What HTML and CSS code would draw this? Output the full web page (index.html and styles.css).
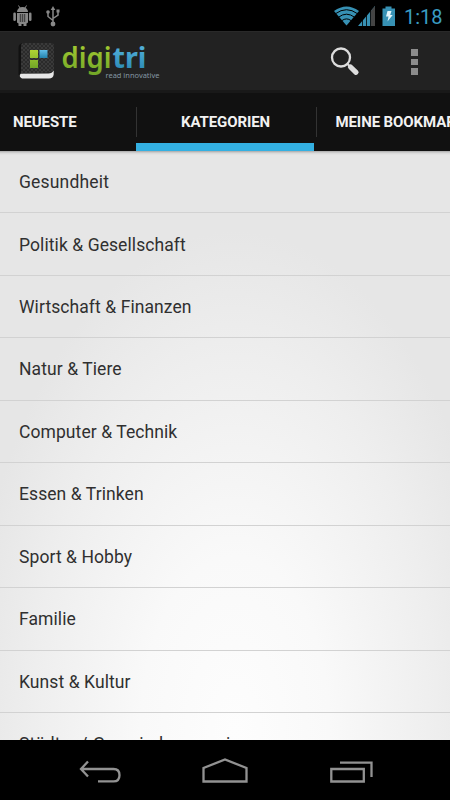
FILE: index.html
```html
<!DOCTYPE html>
<html lang="de">
<head>
<meta charset="utf-8">
<title>digitri</title>
<link rel="stylesheet" href="styles.css">
</head>
<body>
<div class="screen">
  <header class="status">
    <svg class="status-left" width="70" height="31" viewBox="0 0 70 31">
      <g fill="#888">
        <path d="M17 12a5.500 5 0 0 1 11 0z"/>
        <rect x="13.300" y="12.500" width="2.600" height="8.500" rx="1.300"/><rect x="28.900" y="12.500" width="2.600" height="8.500" rx="1.300"/>
        <path d="M17 13h11v9.500l-1.500 1v2.500h-3v-2h-2v2h-3v-2.500l-1.500-1z"/>
      </g>
      <path d="M18.500 5.500l1.500 2.500m6.500-2.500L25 8" stroke="#888"/>
      <path d="M19 14h6.500v8H19z" fill="#444"/>
      <path d="M19 15h6.500M19 17h6.500M19 19h6.500M19 21h6.500" stroke="#aaa" stroke-dasharray="1 1"/>
      <g fill="none" stroke="#888" stroke-width="1.500"><path d="M53 8v16M53 20.500l-5-4V12M53 18.500l5-3.500v-4"/></g>
      <path d="M53 6l2.300 4h-4.600z" fill="#888"/><circle cx="53" cy="24" r="2.400" fill="#888"/><circle cx="48" cy="12" r="1.800" fill="#888"/><path d="M56.500 9.500h3v3h-3z" fill="#888"/>
    </svg>
    <svg class="status-right" width="66" height="31" viewBox="332 0 66 31">
      <path d="M346.500 25.500L334 11Q346.500 2 359 11z" fill="#3791b4"/>
      <path d="M335.500 13.700q11-8 22 0M338.500 17.200q8-6 16 0M341.800 20.700q4.700-3.600 9.400 0" fill="none" stroke="#000" stroke-width="1"/>
      <path d="M358 26L375 6v20z" fill="#3791b4"/><path d="M370.500 11.300L375 6v20h-4.500z" fill="#444"/>
      <path d="M362.500 20v6M366.500 15v11M370.500 10v16" stroke="#000" stroke-width=".8"/>
      <path d="M382.500 8.500h3v-2h6v2h3.500V26h-12.500z" fill="#3791b4"/>
      <path d="M387.500 11h4l-1.300 4h2.500l-5.200 6.500 1-5h-2.500z" fill="#e4f5fa"/>
    </svg>
    <span class="clock">1:18</span>
  </header>

  <div class="actionbar">
    <svg class="logo" width="170" height="59" viewBox="0 31 170 59">
      <defs>
        <linearGradient id="green" x2="0" y2="1"><stop stop-color="#afd334"/><stop offset="1" stop-color="#71a527"/></linearGradient>
        <linearGradient id="blue" x2="0" y2="1"><stop stop-color="#62bee8"/><stop offset="1" stop-color="#2383ad"/></linearGradient>
        <pattern id="weave" width="4" height="4" patternUnits="userSpaceOnUse"><path fill="#3a3a3a" d="M0 0h4v4H0z"/><path d="M0 0l4 4M4 0L0 4" stroke="#2a2a2a"/></pattern>
      </defs>
      <path d="M18.500 75V48q0-5 5.500-5v29z" fill="#111"/>
      <path d="M24 43h27q3 0 3 3v26l-33 2V46q0-3 3-3z" fill="url(#weave)"/>
      <path d="M20.500 73.800l28-.3q3.500 0 5.200-3v4q-.5 4-4.700 4H22q-3.500-1.500-1.500-4.700z" fill="#e6e6e6"/>
      <path d="M30 50h8v8h-8zM30 60h8v8h-8z" fill="url(#green)"/><path d="M39.500 50h8v8h-8z" fill="url(#blue)"/>
      <text class="brand" x="61.500" y="67.500" textLength="50" lengthAdjust="spacingAndGlyphs" fill="url(#green)">digi</text>
      <text class="brand brand-bold" x="112.500" y="67.500" textLength="34" lengthAdjust="spacingAndGlyphs" fill="url(#blue)">tri</text>
      <text class="tagline" x="105.500" y="78" textLength="54" lengthAdjust="spacingAndGlyphs">read innovative</text>
    </svg>
    <div class="actions">
      <svg width="30" height="59" viewBox="330 31 30 59">
        <circle cx="341" cy="57.500" r="9" fill="none" stroke="#ddd" stroke-width="2.300"/>
        <path d="M347.500 64l2.500 2.500" stroke="#ddd" stroke-width="2"/><path d="M350.500 67l5.500 5.300" stroke="#ddd" stroke-width="5.200" stroke-linecap="round"/>
      </svg>
      <div class="overflow"><i></i><i></i><i></i></div>
    </div>
  </div>

  <nav class="tabs">
    <div class="tab tab-first"><span>NEUESTE</span></div>
    <div class="tab tab-active"><span>KATEGORIEN</span></div>
    <div class="tab tab-last"><span>MEINE BOOKMARKS</span></div>
  </nav>

  <ul class="list">
    <li>Gesundheit</li>
    <li>Politik &amp; Gesellschaft</li>
    <li>Wirtschaft &amp; Finanzen</li>
    <li>Natur &amp; Tiere</li>
    <li>Computer &amp; Technik</li>
    <li>Essen &amp; Trinken</li>
    <li>Sport &amp; Hobby</li>
    <li>Familie</li>
    <li>Kunst &amp; Kultur</li>
    <li>Städte- / Gemeindemagazine</li>
  </ul>

  <footer class="navbar">
    <svg width="450" height="60" viewBox="0 740 450 60" fill="none" stroke="#929292" stroke-width="2.300">
      <path d="M88 761.500l-7 7.500 7 7.500M81 769h32.500q6 0 6 6.200t-6 6.200H98"/>
      <path d="M203.500 781.500v-13.500l21.500-8.500 21.500 8.500v13.500z"/>
      <path d="M331.300 769h32.500v12.500h-32.500zM340 762.600h31.500V777"/>
    </svg>
  </footer>
</div>
</body>
</html>
```
FILE: styles.css
```css
* { box-sizing: border-box; }
body { margin: 0; background: #000; font-family: Roboto, "Liberation Sans", sans-serif; }
.screen { width: 450px; height: 800px; overflow: hidden; display: flex; flex-direction: column; }
svg { display: block; }

.status { height: 31px; flex: none; display: flex; background: #000; }
.status-right { margin-left: 262px; }
.clock { margin-left: 6px; color: #3a9cc2; font-size: 20px; line-height: 34px; font-weight: 400; }

.actionbar { height: 59px; flex: none; display: flex; background: #222; border-top: 1px solid #292929; }
.actionbar svg { margin-top: -1px; }
.brand { font: 600 29px "Noto Sans", "Open Sans", sans-serif; }
.brand-bold { font-weight: 700; }
.tagline { font: 7.500px "Noto Sans", "Open Sans", sans-serif; fill: #8497a2; }
.actions { display: flex; margin-left: 160px; }
.overflow { display: flex; flex-direction: column; gap: 3px; margin: 17px 0 0 51px; }
.overflow i { width: 7px; height: 6.500px; background: #8c8c8c; }

.tabs { height: 61px; flex: none; display: flex; background: #111; border-top: 3px solid #191919; font-size: 15px; letter-spacing: -.1px; font-weight: 700; color: #f2f2f2; line-height: 58px; white-space: nowrap; }
.tab { display: flex; flex: none; }
.tab-first { width: 136px; padding-left: 13px; }
.tab-active { width: 178px; justify-content: center; border-bottom: 8px solid #33b0e2; }
.tab-last { width: 180px; padding-left: 2px; }
.tab-active::before, .tab-last::before { content: ""; width: 1px; height: 30px; margin-top: 14px; background: #333; }
.tab-active span { margin: 0 auto; }
.tab-last span { margin-left: 18.500px; }

.list {
  margin: 0; padding: 0; list-style: none; height: 589px; flex: none; overflow: hidden;
  background: radial-gradient(ellipse 270px 500px at 235px 580px, #fdfdfd 0%, #f9f9f9 35%, #eee 75%, #e6e6e6 100%);
  box-shadow: inset 0 4px 3px -3px #999;
}
.list li { height: 62.500px; padding-left: 19px; border-bottom: 1.500px solid #d2d2d2; line-height: 63px; font-size: 17.500px; letter-spacing: .08px; color: #303030; }
.list li:first-child { height: 62px; line-height: 63px; letter-spacing: .18px; }
.list li:nth-child(2) { line-height: 64px; }
.list li:last-child { word-spacing: 1px; }
.navbar { height: 60px; flex: none; background: #000; }
```
